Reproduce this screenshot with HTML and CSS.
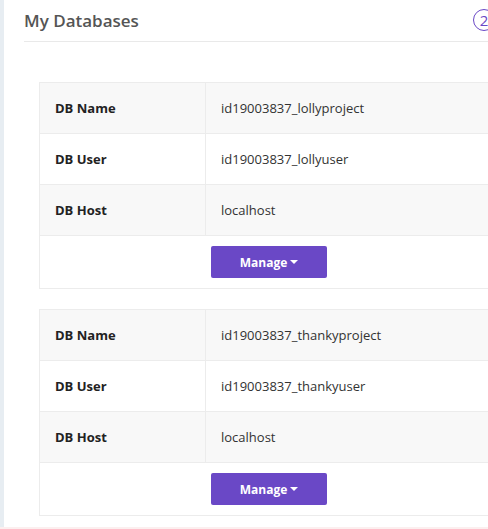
FILE: index.html
```html
<!DOCTYPE html>
<html>
<head>
<meta charset="utf-8">
<link rel="stylesheet" href="styles.css">
</head>
<body>
<div class="page">
  <div class="strip"></div>
  <div class="card">
    <div class="header">
      <h2 class="title">My Databases</h2>
      <span class="badge">2</span>
    </div>
    <div class="list">
      <table class="db">
        <tr class="odd"><th>DB Name</th><td>id19003837_lollyproject</td></tr>
        <tr><th>DB User</th><td>id19003837_lollyuser</td></tr>
        <tr class="odd"><th>DB Host</th><td>localhost</td></tr>
        <tr><td colspan="2" class="actions"><button class="btn">Manage<span class="caret"></span></button></td></tr>
      </table>
      <table class="db">
        <tr class="odd"><th>DB Name</th><td>id19003837_thankyproject</td></tr>
        <tr><th>DB User</th><td>id19003837_thankyuser</td></tr>
        <tr class="odd"><th>DB Host</th><td>localhost</td></tr>
        <tr><td colspan="2" class="actions"><button class="btn">Manage<span class="caret"></span></button></td></tr>
      </table>
    </div>
  </div>
</div>
<div class="footer"></div>
</body>
</html>
```
FILE: styles.css
```css
html, body {
  margin: 0;
  padding: 0;
  background: #ffffff;
  overflow: hidden;
  font-family: "Open Sans", "Noto Sans", sans-serif;
}
.page {
  display: flex;
  width: 540px;
  height: 527px;
  background: #e7edf2;
}
.strip {
  width: 4px;
  flex: none;
}
.card {
  background: #fff;
  width: 520px;
  padding: 0 29px 0 20px;
  box-sizing: border-box;
}
.header {
  display: flex;
  align-items: center;
  height: 42px;
  border-bottom: 1px solid #e9e9e9;
  box-sizing: border-box;
}
.title {
  margin: 0;
  font-size: 17px;
  font-weight: 600;
  color: #555;
}
.badge {
  margin-left: auto;
  width: 22px;
  height: 22px;
  box-sizing: border-box;
  border: 1.5px solid #6a48c6;
  border-radius: 50%;
  color: #6a48c6;
  font-size: 15px;
  display: flex;
  align-items: center;
  justify-content: center;
  margin-top: -1px;
}
.list {
  padding: 40px 0 0 15px;
  display: flex;
  flex-direction: column;
  gap: 20px;
}
.db {
  width: 460px;
  border-collapse: collapse;
  border: 1px solid #ececec;
  font-size: 13px;
  color: #333;
}
.db th, .db td {
  border: 1px solid #ececec;
  height: 51px;
  padding: 0 15px;
  text-align: left;
  box-sizing: border-box;
}
.db th {
  width: 166px;
  font-weight: 700;
  color: #222;
}
.db tr.odd {
  background: #f8f8f8;
}
.db td.actions {
  text-align: center;
  height: 53px;
}
.btn {
  width: 116px;
  height: 32px;
  background: #6a48c6;
  color: #fff;
  border: none;
  border-radius: 2px;
  font-family: "Open Sans", sans-serif;
  font-size: 12px;
  font-weight: 700;
  display: inline-flex;
  align-items: center;
  justify-content: center;
  vertical-align: middle;
}
.caret {
  width: 0;
  height: 0;
  border-left: 4px solid transparent;
  border-right: 4px solid transparent;
  border-top: 4px solid #fff;
  margin-left: 3px;
}
.footer {
  height: 2px;
  background: #fcefef;
}
```
